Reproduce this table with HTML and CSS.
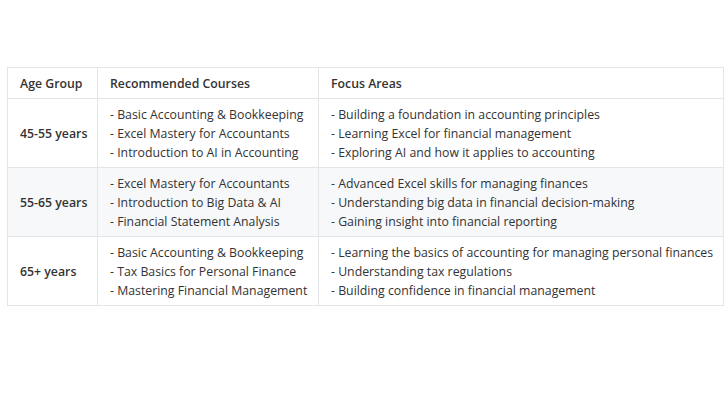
FILE: index.html
```html
<!DOCTYPE html>
<html lang="en">
<head>
<meta charset="utf-8">
<title>Courses by Age Group</title>
<link rel="stylesheet" href="styles.css">
</head>
<body>
<main class="page">
  <table class="courses">
    <colgroup>
      <col class="col-age">
      <col class="col-courses">
      <col class="col-focus">
    </colgroup>
    <thead>
      <tr>
        <th>Age Group</th>
        <th>Recommended Courses</th>
        <th>Focus Areas</th>
      </tr>
    </thead>
    <tbody>
      <tr>
        <td class="age">45-55 years</td>
        <td>- Basic Accounting &amp; Bookkeeping<br>- Excel Mastery for Accountants<br>- Introduction to AI in Accounting</td>
        <td>- Building a foundation in accounting principles<br>- Learning Excel for financial management<br>- Exploring AI and how it applies to accounting</td>
      </tr>
      <tr>
        <td class="age">55-65 years</td>
        <td>- Excel Mastery for Accountants<br>- Introduction to Big Data &amp; AI<br>- Financial Statement Analysis</td>
        <td>- Advanced Excel skills for managing finances<br>- Understanding big data in financial decision-making<br>- Gaining insight into financial reporting</td>
      </tr>
      <tr>
        <td class="age">65+ years</td>
        <td>- Basic Accounting &amp; Bookkeeping<br>- Tax Basics for Personal Finance<br>- Mastering Financial Management</td>
        <td>- Learning the basics of accounting for managing personal finances<br>- Understanding tax regulations<br>- Building confidence in financial management</td>
      </tr>
    </tbody>
  </table>
</main>
</body>
</html>
```
FILE: styles.css
```css
html, body {
  margin: 0;
  padding: 0;
  background: #ffffff;
}

body {
  font-family: "Open Sans", "Noto Sans", "Liberation Sans", sans-serif;
  font-size: 12.3px;
  line-height: 19px;
  color: #333333;
}

.page {
  padding: 67px 6px 0 7px;
}

.courses {
  border-collapse: collapse;
  table-layout: fixed;
  width: 716px;
}

.col-age { width: 90px; }
.col-courses { width: 221px; }
.col-focus { width: 405px; }

.courses th,
.courses td {
  border: 1px solid #e3e5e8;
  padding: 6px 12px 5px;
  text-align: left;
  vertical-align: middle;
  white-space: nowrap;
}

.courses th {
  font-weight: 600;
}

.courses tbody tr:nth-child(2) {
  background: #f6f8fa;
}

.courses .age {
  font-weight: 600;
}
```
